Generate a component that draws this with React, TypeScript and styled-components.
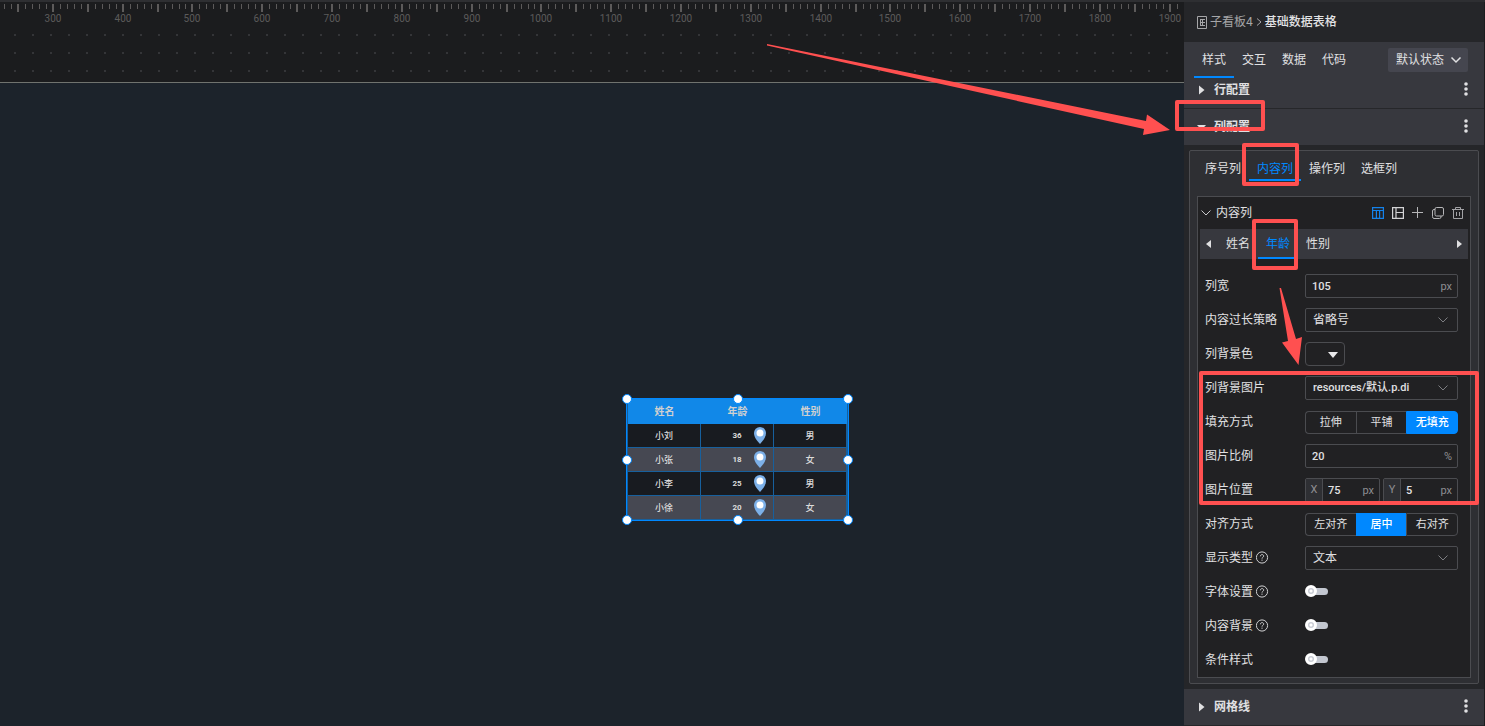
import React from "react";
import styled, { createGlobalStyle } from "styled-components";

const GlobalStyle = createGlobalStyle`
  *, *::before, *::after { box-sizing: border-box; }
  body {
    margin: 0;
    background: #1c232b;
    color: #e0e0e2;
    font: 12px/18px Roboto, "Noto Sans CJK SC", sans-serif;
  }
  button, input, select { font: inherit; color: inherit; }
  button { cursor: pointer; padding: 0; border: 0; background: none; }
`;

const blue = "#0088ff";
const red = "#ff5050";
const line = "#4b4c50";

const Page = styled.div`
  position: relative;
  display: flex;
  min-height: 100vh;
  overflow: hidden;
  border-top: 2px solid #2e2f32;
`;

/* ---------- canvas ---------- */

const Canvas = styled.main`
  flex: 1;
  min-width: 0;
  display: flex;
  flex-direction: column;
  background: #1b1c1e;
`;

const Ruler = styled.svg`
  display: block;
  width: 100%;
  height: 24px;
  flex: none;
`;

const DotGrid = styled.svg`
  display: block;
  width: 100%;
  height: 56px;
  flex: none;
`;

const Board = styled.section`
  position: relative;
  flex: 1;
  border-top: 1px solid #70736f;
  background: #1c232b;
`;

const Placed = styled.div`
  position: absolute;
  left: 626px;
  top: 315px;
  width: 223px;
  border: 1px solid ${blue};
`;

const DataTable = styled.table`
  width: 100%;
  table-layout: fixed;
  border-collapse: separate;
  border-spacing: 0;
  text-align: center;
  font-size: 9px;
  line-height: 12px;
  border: 0 solid #17609d;
  border-width: 0 1px;

  th {
    height: 25px;
    padding: 0;
    background: #1188e8;
    color: #d0d0d0;
    font-size: 10px;
    font-weight: 700;
  }
  td {
    position: relative;
    height: 24px;
    padding: 0;
    border: 0 solid #17609d;
    border-width: 0 1px 1px 0;
    background: #181b20;
    font-weight: 500;
    color: #dcdcdc;
  }
  tr:nth-child(even) td { background: #464852; }
  td:nth-child(2) { font-size: 8px; font-weight: 700; }
`;

const Pin = styled.svg`
  position: absolute;
  right: 7px;
  top: 3px;
  width: 12px;
  height: 17px;
`;

const Handle = styled.i<{ $x: string; $y: string }>`
  position: absolute;
  left: ${(p) => p.$x};
  top: ${(p) => p.$y};
  width: 10px;
  height: 10px;
  margin: -5px;
  border: 1px solid ${blue};
  border-radius: 50%;
  background: #fff;
`;

/* ---------- side panel ---------- */

const Panel = styled.aside`
  position: relative;
  flex: none;
  width: 301px;
  border-right: 1px solid #1c1d1f;
  background: #252629;
`;

const Crumbs = styled.nav`
  display: flex;
  align-items: center;
  gap: 2px;
  height: 40px;
  padding-left: 12px;
  color: #a6a6a8;
  a { color: inherit; text-decoration: none; }
  strong { font-weight: 500; color: #e2e2e4; }
  svg { flex: none; }
`;

const TabBar = styled.div`
  display: flex;
  align-items: center;
  height: 36px;
  padding: 0 16px 0 10px;
  background: #37383e;
`;

const Tab = styled.button<{ $active?: boolean; $tone?: string; $height: number }>`
  height: ${(p) => p.$height}px;
  padding: 0 8px;
  white-space: nowrap;
  color: ${(p) => (p.$active && p.$tone) || "#e0e0e2"};
  box-shadow: ${(p) => (p.$active ? `inset 0 -2px 0 ${blue}` : "none")};
`;

const StateBox = styled.div`
  position: relative;
  display: flex;
  margin-left: auto;
  width: 80px;
  height: 24px;
  svg { position: absolute; right: 6px; top: 8px; pointer-events: none; }
`;

const StateSelect = styled.select`
  appearance: none;
  width: 100%;
  padding: 0 8px;
  border: 0;
  border-radius: 2px;
  background: #45464f;
`;

const SectionHead = styled.header<{ $tucked?: boolean }>`
  display: flex;
  align-items: center;
  height: ${(p) => (p.$tucked ? 30 : 36)}px;
  padding: 0 16px 0 15px;
  padding-bottom: ${(p) => (p.$tucked ? 8 : 2)}px;
  background: #37383e;
`;

const SectionToggle = styled.button`
  display: flex;
  align-items: center;
  padding-top: 2px;
  font-weight: 700;
  svg { width: 15px; height: 10px; }
`;

const MoreButton = styled.button`
  display: flex;
  margin-left: auto;
`;

const Divider = styled.hr`
  height: 1px;
  margin: 0;
  border: 0;
  background: #26272a;
`;

const Group = styled.div`
  margin: 5px 5px;
  padding: 0 7px 5px;
  border: 1px solid ${line};
  border-radius: 2px;
  background: #2e2f33;
`;

const GroupTabs = styled.div`
  display: flex;
  padding-top: 5px;
  margin-bottom: 15px;
`;

const Card = styled.div`
  padding: 0 2px;
  border: 1px solid ${line};
  background: #212123;
`;

const CardHead = styled.div`
  display: flex;
  align-items: center;
  height: 32px;
  padding: 0 4px 0 0;
`;

const CardTitle = styled.button`
  display: flex;
  align-items: center;
  gap: 4px;
`;

const CardActions = styled.div`
  display: flex;
  gap: 8px;
  margin-left: auto;
  button { display: flex; }
`;

const ItemTabs = styled.div`
  display: flex;
  align-items: center;
  height: 30px;
  padding: 0 6px;
  margin-bottom: 10px;
  background: #37383e;
`;

const ArrowButton = styled.button`
  display: flex;
  width: 12px;
  &:last-child { width: 5px; margin-left: auto; }
`;

const Row = styled.div`
  display: flex;
  align-items: center;
  height: 34px;
  padding: 0 10px 0 5px;
`;

const RowLabel = styled.label`
  display: flex;
  align-items: center;
  gap: 3px;
  width: 100px;
  flex: none;
  white-space: nowrap;
`;

const RowBody = styled.div`
  position: relative;
  display: flex;
  flex: 1;
  min-width: 0;
  gap: 3px;
`;

const Field = styled.span`
  display: flex;
  flex: 1;
  min-width: 0;
  height: 24px;
  align-items: center;
  border: 1px solid ${line};
  border-radius: 2px;
  color: #8e8e92;
`;

const Prefix = styled.span`
  width: 17px;
  height: 100%;
  flex: none;
  border-right: 1px solid ${line};
  background: #2e2f33;
  text-align: center;
  font-size: 11px;
  line-height: 22px;
`;

const TextBox = styled.input<{ $tight?: boolean }>`
  flex: 1;
  min-width: 0;
  width: 0;
  padding: 2px 0 0 ${(p) => (p.$tight ? 5 : 6)}px;
  border: 0;
  outline: 0;
  background: none;
  color: #e0e0e2;
  font-size: 11px;
  font-weight: 500;
`;

const Unit = styled.span`
  padding: 2px 5px 0 0;
  font-size: 11px;
`;

const Select = styled.select<{ $small?: boolean }>`
  appearance: none;
  width: 100%;
  height: 24px;
  padding: 0 24px 0 7px;
  border: 1px solid ${line};
  border-radius: 2px;
  background: none;
  font-size: ${(p) => (p.$small ? 11 : 12)}px;
  font-weight: ${(p) => (p.$small ? 500 : 400)};
  & + svg { position: absolute; right: 9px; top: 8px; pointer-events: none; }
`;

const ColorButton = styled.button`
  display: flex;
  justify-content: flex-end;
  align-items: center;
  width: 40px;
  height: 24px;
  padding: 2px 6px 0 0;
  border: 1px solid ${line};
  border-radius: 4px;
`;

const Segments = styled.div`
  display: flex;
  width: 100%;
  height: 23px;
`;

const Segment = styled.button<{ $active?: boolean }>`
  flex: 1;
  padding-top: 1px;
  border: 1px solid ${(p) => (p.$active ? blue : line)};
  font-size: 11px;
  font-weight: ${(p) => (p.$active ? 500 : 400)};
  color: ${(p) => (p.$active ? "#fff" : "inherit")};
  background: ${(p) => (p.$active ? blue : "none")};
  &:not(:last-child) { border-right-width: 0; }
  &:first-child { border-radius: 4px 0 0 4px; }
  &:last-child { border-radius: 0 4px 4px 0; }
`;

const Switch = styled.input`
  appearance: none;
  position: relative;
  width: 23px;
  height: 14px;
  margin: 0;
  &::before {
    content: "";
    position: absolute;
    inset: 3px 0 4px 4px;
    border-radius: 4px;
    background: #c3c7d0;
  }
  &::after {
    content: "";
    position: absolute;
    left: 0;
    top: 0;
    width: 12px;
    height: 12px;
    border: 3px solid #fff;
    border-radius: 50%;
    background: radial-gradient(circle, #fff 0 1px, #c9ccd4 2px 3px);
  }
`;

/* ---------- annotations ---------- */

const Mark = styled.i<{ $l: number; $t: number; $w: number; $h: number }>`
  position: absolute;
  left: ${(p) => p.$l}px;
  top: ${(p) => p.$t}px;
  width: ${(p) => p.$w}px;
  height: ${(p) => p.$h}px;
  border: 4px solid ${red};
  border-radius: 2px;
  pointer-events: none;
`;

const Arrows = styled.svg`
  position: absolute;
  right: 0;
  top: 0;
  pointer-events: none;
`;

/* ---------- icons ---------- */

const Chevron = ({ color = "#7d7e82", width = 1 }: { color?: string; width?: number }) => (
  <svg width="12" height="8" viewBox="0 0 12 8" fill="none" stroke={color} strokeWidth={width}>
    <path d="M1.500 1.500 6 6l4.500-4.500" />
  </svg>
);

const Help = () => (
  <svg width="13" height="14" viewBox="0 0 13 14" fill="none" stroke="#d0d0d2">
    <circle cx="6" cy="6.500" r="5.600" />
    <path d="M4.400 5.300c0-2.300 3.300-2.200 3.300-.2 0 1.200-1.700 1.200-1.700 2.500M6 8.600v1.200" />
  </svg>
);

const More = () => (
  <svg width="4" height="14" viewBox="0 0 4 14" fill="#e0e0e2">
    <circle cx="2" cy="2" r="1.800" />
    <circle cx="2" cy="7" r="1.800" />
    <circle cx="2" cy="12" r="1.800" />
  </svg>
);

const Caret = ({ open }: { open?: boolean }) => (
  <svg viewBox="0 0 15 10" fill="#e0e0e2" overflow="visible">
    <path d={open ? "M-2 3h9L2.500 8z" : "M0 .5 5.500 5 0 9.500z"} />
  </svg>
);

const actionIcons = [
  { name: "表格视图", color: "#1482ea", width: 1.2, d: "M.6.6h10.800v10.800H.6zM.6 3.500h10.800M4.400 3.500v8M7.600 3.500v8" },
  { name: "分栏视图", color: "#d4d4d6", width: 1.2, d: "M.6.6h10.800v10.800H.6zM4 .6v10.800M4 5.500h7.500" },
  { name: "添加", color: "#b6b6b8", width: 1, d: "M5.500 0v11M0 5.500h11" },
  { name: "复制", color: "#b6b6b8", width: 1, d: "M4.500.5h5.500q1.500 0 1.500 1.500v5.500q0 1.500-1.500 1.500h-5.500Q3 9 3 7.500V2Q3 .5 4.500.5M3 2.500H2Q.5 2.500.5 4v5.500Q.5 11.500 2 11.500h5.500q1.500 0 1.500-1.500v-1" },
  { name: "删除", color: "#a2a2a5", width: 1, d: "M0 2.500h12M3.500 2.500v-2h5v2M1.500 2.500v9h9v-9M4.500 5v4M7.500 5v4" },
];

/* ---------- data ---------- */

const people = [
  ["小刘", "36", "男"],
  ["小张", "18", "女"],
  ["小李", "25", "男"],
  ["小徐", "20", "女"],
];

const tickStep = 6.98;
const ticks = Array.from({ length: 170 }, (_, i) => ({
  x: Math.round(4 + i * tickStep),
  major: i % 5 === 2,
  label: i % 10 === 7 ? 230 + i * 10 : null,
}));

const NumberField = ({ id, value, unit, prefix }: { id: string; value: string; unit: string; prefix?: string }) => (
  <Field>
    {prefix && <Prefix>{prefix}</Prefix>}
    <TextBox id={id} aria-label={prefix} $tight={!!prefix} defaultValue={value} />
    <Unit>{unit}</Unit>
  </Field>
);

const DropDown = ({ id, value, small }: { id: string; value: string; small?: boolean }) => (
  <>
    <Select id={id} $small={small}>
      <option>{value}</option>
    </Select>
    <Chevron />
  </>
);

const Choice = ({ options, initial, label }: { options: string[]; initial: number; label: string }) => {
  const [picked, setPicked] = React.useState(initial);
  return (
    <Segments role="group" aria-label={label}>
      {options.map((o, i) => (
        <Segment key={o} $active={i === picked} aria-pressed={i === picked} onClick={() => setPicked(i)}>
          {o}
        </Segment>
      ))}
    </Segments>
  );
};

const rows: { id: string; label: string; help?: boolean; control: React.ReactNode }[] = [
  { id: "width", label: "列宽", control: <NumberField id="width" value="105" unit="px" /> },
  { id: "overflow", label: "内容过长策略", control: <DropDown id="overflow" value="省略号" /> },
  {
    id: "color",
    label: "列背景色",
    control: (
      <ColorButton id="color">
        <svg width="10" height="6" fill="#e8e8ea"><path d="M0 0h10L5 6z" /></svg>
      </ColorButton>
    ),
  },
  { id: "image", label: "列背景图片", control: <DropDown id="image" value="resources/默认.p.di" small /> },
  { id: "fill", label: "填充方式", control: <Choice label="填充方式" options={["拉伸", "平铺", "无填充"]} initial={2} /> },
  { id: "scale", label: "图片比例", control: <NumberField id="scale" value="20" unit="%" /> },
  {
    id: "pos",
    label: "图片位置",
    control: (
      <>
        <NumberField id="pos" prefix="X" value="75" unit="px" />
        <NumberField id="posY" prefix="Y" value="5" unit="px" />
      </>
    ),
  },
  { id: "align", label: "对齐方式", control: <Choice label="对齐方式" options={["左对齐", "居中", "右对齐"]} initial={1} /> },
  { id: "type", label: "显示类型", help: true, control: <DropDown id="type" value="文本" /> },
  { id: "font", label: "字体设置", help: true, control: <Switch id="font" type="checkbox" role="switch" /> },
  { id: "bg", label: "内容背景", help: true, control: <Switch id="bg" type="checkbox" role="switch" /> },
  { id: "cond", label: "条件样式", control: <Switch id="cond" type="checkbox" role="switch" /> },
];

const Section = ({ title, open, tucked }: { title: string; open?: boolean; tucked?: boolean }) => (
  <SectionHead $tucked={tucked}>
    <SectionToggle aria-expanded={!!open}>
      <Caret open={open} />
      {title}
    </SectionToggle>
    <MoreButton aria-label="更多"><More /></MoreButton>
  </SectionHead>
);

export default function App() {
  return (
    <Page>
      <GlobalStyle />
      <Canvas>
        <Ruler>
          {ticks.map((t) => (
            <g key={t.x}>
              <rect x={t.major ? t.x - 1 : t.x} y="2" width={t.major ? 2 : 1} height={t.major ? 8 : 5} fill="#5c5a5a" />
              {t.label !== null && (
                <text x={t.x} y="20" textAnchor="middle" fontSize="10" fill="#5c5b5b">{t.label}</text>
              )}
            </g>
          ))}
        </Ruler>
        <DotGrid>
          <defs>
            <pattern id="dots" width="18" height="18" patternUnits="userSpaceOnUse">
              <rect x="14" y="8" width="2" height="2" fill="#343538" />
            </pattern>
          </defs>
          <rect width="100%" height="100%" fill="url(#dots)" />
        </DotGrid>
        <Board>
          <Placed>
            <DataTable>
              <thead>
                <tr><th>姓名</th><th>年龄</th><th>性别</th></tr>
              </thead>
              <tbody>
                {people.map(([name, age, sex]) => (
                  <tr key={name}>
                    <td>{name}</td>
                    <td>
                      {age}
                      <Pin viewBox="0 0 12 17">
                        <path d="M6 0a6 6 0 0 1 6 6c0 4-3 8-6 11C3 14 0 10 0 6a6 6 0 0 1 6-6z" fill="#7cb0e8" />
                        <circle cx="6" cy="6" r="3.500" fill="#fff" />
                      </Pin>
                    </td>
                    <td>{sex}</td>
                  </tr>
                ))}
              </tbody>
            </DataTable>
            {["0%", "50%", "100%"].flatMap((x, i) =>
              ["0%", "50%", "100%"].map((y, j) =>
                i === 1 && j === 1 ? null : <Handle key={x + y} $x={x} $y={y} />
              )
            )}
          </Placed>
        </Board>
      </Canvas>

      <Panel>
        <Crumbs>
          <svg width="12" height="14" viewBox="0 0 12 14" fill="none" stroke="#a6a6a8">
            <path d="M1.500 1.500h9v12h-9zM4 4.500h5M4 7.500h5M4 10.500h5M4.500 4v7M6.500 4.500v6" />
          </svg>
          <a href="#board">子看板4</a>
          <svg width="8" height="8" fill="none" stroke="#a6a6a8"><path d="M2 .5 6 4 2 7.500" /></svg>
          <strong>基础数据表格</strong>
        </Crumbs>
        <TabBar>
          {["样式", "交互", "数据", "代码"].map((t, i) => (
            <Tab key={t} $active={i === 0} $height={36}>{t}</Tab>
          ))}
          <StateBox>
            <StateSelect aria-label="状态"><option>默认状态</option></StateSelect>
            <Chevron color="#e0e0e2" width={1.5} />
          </StateBox>
        </TabBar>
        <Section title="行配置" tucked />
        <Divider />
        <Section title="列配置" open />
        <Group>
          <GroupTabs>
            {["序号列", "内容列", "操作列", "选框列"].map((t, i) => (
              <Tab key={t} $active={i === 1} $tone={blue} $height={25}>{t}</Tab>
            ))}
          </GroupTabs>
          <Card>
            <CardHead>
              <CardTitle aria-expanded>
                <Chevron color="#c8c8ca" />
                内容列
              </CardTitle>
              <CardActions>
                {actionIcons.map((a) => (
                  <button key={a.name} aria-label={a.name}>
                    <svg width="12" height="12" viewBox="0 0 12 12" fill="none" stroke={a.color} strokeWidth={a.width}>
                      <path d={a.d} />
                    </svg>
                  </button>
                ))}
              </CardActions>
            </CardHead>
            <ItemTabs>
              <ArrowButton aria-label="上一列">
                <svg width="5" height="8" fill="#e0e0e2"><path d="M5 0v8L0 4z" /></svg>
              </ArrowButton>
              {["姓名", "年龄", "性别"].map((t, i) => (
                <Tab key={t} $active={i === 1} $tone={blue} $height={30}>{t}</Tab>
              ))}
              <ArrowButton aria-label="下一列">
                <svg width="5" height="8" fill="#e0e0e2"><path d="M0 0v8l5-4z" /></svg>
              </ArrowButton>
            </ItemTabs>
            {rows.map((r) => (
              <Row key={r.id}>
                <RowLabel htmlFor={r.id}>
                  {r.label}
                  {r.help && <Help />}
                </RowLabel>
                <RowBody>{r.control}</RowBody>
              </Row>
            ))}
          </Card>
        </Group>
        <Section title="网格线" />
        <Mark $l={-9} $t={98} $w={90} $h={31} />
        <Mark $l={58} $t={141} $w={57} $h={43} />
        <Mark $l={68} $t={217} $w={46} $h={51} />
        <Mark $l={15} $t={369} $w={280} $h={134} />
      </Panel>

      <Arrows width="720" height="380" viewBox="765 2 720 380" fill={red}>
        <path d="M767 44 1146 121 1147 114.500 1170 130 1143 135 1144 129 767 45.500z" />
        <path d="M1279.500 288h1.500L1296 339 1302 337 1298.500 365 1282 342.500 1288 341z" />
      </Arrows>
    </Page>
  );
}
